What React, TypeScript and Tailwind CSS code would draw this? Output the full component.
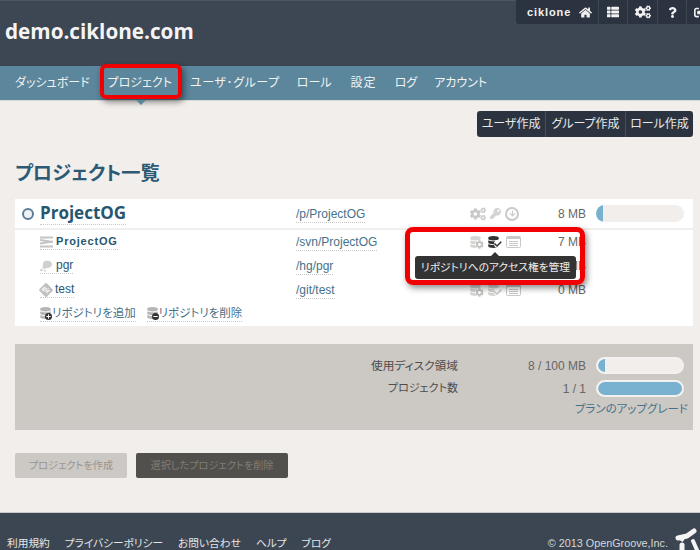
import React from "react";
import { FaHome, FaThList, FaCogs, FaCog, FaQuestion, FaSignOutAlt, FaKey, FaDatabase, FaGitSquare, FaPlus, FaMinus, FaCheck, FaArrowDown } from "react-icons/fa";

function Bar({ pct, light }: { pct: number; light?: boolean }) {
  return (
    <div className={`h-[17px] w-[88px] rounded-full bg-[#f1eeeb] overflow-hidden ${light ? "border-2 border-[#f4f2f0]" : ""}`}>
      <div className="h-full bg-[#78b2d0] rounded-l-full" style={{ width: `${pct}%` }} />
    </div>
  );
}

function DbBadge({ kind, active }: { kind: "cog" | "check"; active?: boolean }) {
  return (
    <span className="relative w-[14px] h-[13px] inline-block">
      <FaDatabase className={`w-[11px] h-[12px] ${active ? "text-[#333]" : "text-[#d4d4d2]"}`} />
      {kind === "cog" ? (
        <FaCog className="absolute right-0 bottom-0 w-[9px] h-[9px] text-[#c4c4c2] bg-white rounded-full" />
      ) : (
        <FaCheck className={`absolute right-0 bottom-[1px] w-[8px] h-[8px] bg-white rounded-full ${active ? "text-[#333]" : "text-[#c4c4c2]"}`} />
      )}
    </span>
  );
}

function SheetIcon() {
  return (
    <svg width="15" height="12" viewBox="0 0 15 12">
      <rect x="0.5" y="0.5" width="14" height="11" rx="1" fill="#fff" stroke="#c9c9c7" />
      <rect x="1" y="1" width="13" height="2" fill="#c9c9c7" />
      <path d="M3 5.5h9M3 7.5h9M3 9.5h9" stroke="#c9c9c7" />
    </svg>
  );
}

function RepoRow({ icon, name, path, size, bold, active }: { icon: React.ReactNode; name: string; path: string; size: string; bold?: boolean; active?: boolean }) {
  return (
    <div className="flex items-center h-6 text-[12px]">
      <div className="w-[281px] pl-[25px] flex items-center">
        <span className="flex items-center gap-[3px] border-b border-dotted border-[#c8c8c8] leading-[15px] text-[#27566f]">
          {icon}
          <span className={bold ? "font-bold text-[11px] tracking-[0.8px]" : ""}>{name}</span>
        </span>
      </div>
      <div className="w-[174px]">
        <span className="border-b border-dotted border-[#c8c8c8] text-[#47718a] leading-[15px] inline-block">{path}</span>
      </div>
      <div className="w-[52px] flex items-center gap-[4px]">
        <DbBadge kind="cog" />
        <DbBadge kind="check" active={active} />
        <SheetIcon />
      </div>
      <div className="w-[64px] text-right text-[#666] text-[12px]">{size}</div>
    </div>
  );
}

function RepoLink({ label, plus }: { label: string; plus?: boolean }) {
  return (
    <span className="flex items-center border-b border-dotted border-[#c8c8c8] leading-[15px]">
      <span className="relative w-[12px] h-[13px] inline-block">
        <FaDatabase className="w-[11px] h-[12px] text-[#b5b5b3]" />
        <span className="absolute right-0 bottom-0 w-[7px] h-[7px] rounded-full bg-[#333] flex items-center justify-center">
          {plus ? <FaPlus className="w-[5px] h-[5px] text-white" /> : <FaMinus className="w-[5px] h-[5px] text-white" />}
        </span>
      </span>
      {label}
    </span>
  );
}

export default function App() {
  return (
    <div className="relative w-[700px] h-[550px] overflow-hidden bg-[#f1eeeb] flex flex-col font-['Liberation_Sans','Noto_Sans_CJK_JP',sans-serif] [font-feature-settings:'palt']">
      <header className="h-[66px] shrink-0 bg-[#3d4653] flex justify-between border-t border-[#4c5561] relative">
        <h1 className="pl-[5px] pt-[15px] text-[20.7px] leading-[30px] font-bold text-[#f4f4f4] font-['Open_Sans',sans-serif]">demo.ciklone.com</h1>
        <div className="flex items-start h-[24px] -mt-px text-[#f2f2f2]">
          <div className="h-[24px] w-[82px] pl-[11px] flex items-center gap-[8px] bg-[#2c3340] rounded-bl-[3px]">
            <span className="font-bold text-[11px] tracking-[0.9px]">ciklone</span>
            <FaHome className="w-[13px] h-[13px] text-[#eee]" />
          </div>
          <div className="h-[24px] w-[28px] ml-px bg-[#2c3340] flex items-center justify-center"><FaThList className="w-[14px] h-[12px]" /></div>
          <div className="h-[24px] w-[29px] ml-px bg-[#2c3340] flex items-center justify-center"><FaCogs className="w-[16px] h-[14px]" /></div>
          <div className="h-[24px] w-[28px] ml-px bg-[#2c3340] flex items-center justify-center"><FaQuestion className="w-[11px] h-[11px]" /></div>
          <div className="h-[24px] w-[13px] ml-px bg-[#2c3340] flex items-center pl-[7px] overflow-hidden"><FaSignOutAlt className="w-[13px] h-[13px] shrink-0" /></div>
        </div>
      </header>

      <nav className="h-[35px] shrink-0 bg-[#5b869b] border-b border-[#d9d9d6] flex items-center pl-[15px] text-[12px] text-[#f1f3f4] relative whitespace-nowrap leading-[34px]">
        <span>ダッシュボード</span>
        <span className="ml-[18px]">プロジェクト</span>
        <span className="ml-[18px] tracking-[0.6px]">ユーザ･グループ</span>
        <span className="ml-[17px]">ロール</span>
        <span className="ml-[19px] tracking-[1px]">設定</span>
        <span className="ml-[18px]">ログ</span>
        <span className="ml-[17px]">アカウント</span>
      </nav>

      <main className="flex-1 pl-[15px] pr-[7px] relative">
        <div className="flex justify-end pt-[10px] text-[12px] text-[#e8e9ea]">
          <div className="flex h-[26px] w-[216px] bg-[#2c3340] rounded-[3px] items-center">
            <span className="w-[69px] text-center border-r border-[#4a505b] leading-[26px]">ユーザ作成</span>
            <span className="w-[80px] text-center border-r border-[#4a505b] leading-[26px]">グループ作成</span>
            <span className="flex-1 text-center leading-[26px]">ロール作成</span>
          </div>
        </div>

        <h2 className="mt-[23px] text-[19.2px] leading-[28px] font-bold text-[#2c5a74]">プロジェクト一覧</h2>

        <section className="mt-[11px] bg-white">
          <div className="flex items-center h-[31px] border-b-2 border-[#f1eeeb]">
            <div className="w-[25px] flex justify-center pl-[1px]">
              <span className="w-[12px] h-[12px] rounded-full border-2 border-[#5c7c9a] bg-[#eef2f5]" />
            </div>
            <div className="w-[256px]">
              <span className="text-[17px] font-bold text-[#27566f] leading-[22px] inline-block border-b border-dotted border-[#c8c8c8] font-['Open_Sans',sans-serif]">ProjectOG</span>
            </div>
            <div className="w-[174px] text-[12px]">
              <span className="text-[#47718a] border-b border-dotted border-[#c8c8c8] leading-[15px] inline-block">/p/ProjectOG</span>
            </div>
            <div className="w-[52px] flex items-center gap-[4px] text-[#c9c9c7]">
              <FaCogs className="w-[16px] h-[14px]" />
              <FaKey className="w-[11px] h-[11px] text-[#d4d4d2]" />
              <span className="w-[14px] h-[14px] rounded-full border-2 border-[#c9c9c7] flex items-center justify-center"><FaArrowDown className="w-[7px] h-[7px]" /></span>
            </div>
            <div className="w-[64px] text-right text-[#666] text-[12px]">8 MB</div>
            <div className="ml-[10px]"><Bar pct={8} /></div>
          </div>

          <div className="h-[96px]">
            <RepoRow bold active name="ProjectOG" path="/svn/ProjectOG" size="7 MB" icon={<svg width="13" height="12" viewBox="0 0 13 12"><path d="M0 1.5h13M0 4l13 2M0 7.5l13-2M0 10.5h13" stroke="#c4c4c4" strokeWidth="2" fill="none" /></svg>} />
            <RepoRow name="pgr" path="/hg/pgr" size="0 MB" icon={<svg width="13" height="12" viewBox="0 0 13 12"><path d="M5 1c3-1 7 0 7 3 0 3-3 4-5 4-1 0-2 1-3 1-1 0-2-2-1-4 0-2 0-3 2-4z" fill="#cfcfcd" /><circle cx="1.5" cy="10" r="1.3" fill="#cfcfcd" /><circle cx="5" cy="10.7" r="1" fill="#cfcfcd" /></svg>} />
            <RepoRow name="test" path="/git/test" size="0 MB" icon={<FaGitSquare className="w-[12px] h-[12px] rotate-45 text-[#c0c0c0]" />} />
            <div className="flex items-center h-6 pl-[25px] gap-[11px] text-[11.5px] text-[#47718a]">
              <RepoLink plus label="リポジトリを追加" />
              <RepoLink label="リポジトリを削除" />
            </div>
          </div>
        </section>

        <section className="mt-[18px] h-[86px] bg-[#ccc8c4] pt-[13px] text-[11.7px] text-[#555]">
          <div className="flex items-center h-[17px]">
            <div className="w-[443px] text-right text-[#4d4d4d]">使用ディスク領域</div>
            <div className="w-[128px] text-right text-[#666] text-[12px]">8 / 100 MB</div>
            <div className="ml-[10px]"><Bar pct={8} light /></div>
          </div>
          <div className="flex items-center h-[17px] mt-[6px]">
            <div className="w-[443px] text-right text-[#4d4d4d] text-[11px]">プロジェクト数</div>
            <div className="w-[128px] text-right text-[#666] text-[12px]">1 / 1</div>
            <div className="ml-[10px]"><Bar pct={100} light /></div>
          </div>
          <div className="mt-[3px] pr-[5px] text-right text-[#47718a] leading-[18px] text-[11.5px]">プランのアップグレード</div>
        </section>

        <div className="mt-[23px] flex gap-[9px] text-[10.2px]">
          <div className="w-[112px] h-[25px] leading-[25px] text-center rounded-[2px] bg-[#ccc8c4] text-[#98958f]">プロジェクトを作成</div>
          <div className="w-[152px] h-[25px] leading-[25px] text-center rounded-[2px] bg-[#52504c] text-[#7f7d78]">選択したプロジェクトを削除</div>
        </div>
      </main>

      <footer className="h-[38px] shrink-0 bg-[#3c4652] border-t border-[#c9c9c9] relative flex justify-between items-end px-[7px] text-[10.7px] text-[#e4e6e8]">
        <div className="flex gap-[15px] leading-[14px] whitespace-nowrap">
          <span>利用規約</span><span>プライバシーポリシー</span><span>お問い合わせ</span><span>ヘルプ</span><span>ブログ</span>
        </div>
        <span className="pr-[25px] leading-[14px] text-[10.8px] text-[#d5d8da]">© 2013 OpenGroove,Inc.</span>
        <svg className="absolute right-0 bottom-0" width="26" height="24" viewBox="0 0 26 24">
          <path d="M4 12 L13 10 L20 5" stroke="#f4f4f4" strokeWidth="5" strokeLinecap="round" strokeLinejoin="round" fill="none" />
          <path d="M9 12 L7 15" stroke="#f4f4f4" strokeWidth="4" fill="none" />
          <path d="M8 19 L8 24" stroke="#f4f4f4" strokeWidth="5" strokeLinecap="round" fill="none" />
          <path d="M19 15 L23 24" stroke="#f4f4f4" strokeWidth="4" strokeLinecap="round" fill="none" />
        </svg>
      </footer>

      {/* Tooltip */}
      <div className="absolute left-[415px] top-[256px] w-[161px] h-[23px] rounded-[3px] bg-[#333] text-[#eee] text-[10.75px] leading-[23px] text-center whitespace-nowrap">リポジトリへのアクセス権を管理</div>
      <div className="absolute left-[491px] top-[252px] w-0 h-0 border-x-[4px] border-x-transparent border-b-[4px] border-b-[#333]" />

      {/* Red callouts */}
      <div className="absolute left-[100px] top-[64px] w-[82px] h-[35px] rounded-[6px] border-[4px] border-[#f00000] shadow-[2px_3px_6px_rgba(0,0,0,0.45)]" />
      <div className="absolute left-[405px] top-[227px] w-[180px] h-[58px] rounded-[8px] border-[5px] border-[#f00000] shadow-[2px_3px_6px_rgba(0,0,0,0.45)]" />
      <div className="absolute left-[136px] top-[100px] w-0 h-0 border-x-[5px] border-x-transparent border-t-[5px] border-t-[#5b869b]" />
    </div>
  );
}
